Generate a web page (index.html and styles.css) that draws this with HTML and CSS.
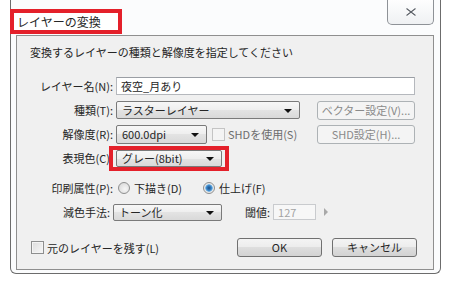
FILE: index.html
```html
<!DOCTYPE html>
<html lang="ja">
  <head>
    <meta charset="UTF-8" />
    <meta name="viewport" content="width=device-width, initial-scale=1.0" />
    <title>レイヤーの変換</title>
    <link rel="stylesheet" href="styles.css">
  </head>
  <body>
    <div class="window">
      <div class="titlebar">
        <span class="title">レイヤーの変換</span>
        <button class="close" type="button" aria-label="閉じる">
          <svg width="14" height="10" viewBox="0 0 14 10">
            <path d="M2.5 1.5 L11.5 8.5 M11.5 1.5 L2.5 8.5" stroke="#ffffff" stroke-width="2.6" fill="none" />
            <path d="M2.5 1.5 L11.5 8.5 M11.5 1.5 L2.5 8.5" stroke="#5a5f66" stroke-width="1.2" fill="none" />
          </svg>
        </button>
      </div>

      <div class="client">
        <p class="intro">変換するレイヤーの種類と解像度を指定してください</p>

        <div class="rows">
          <div class="row">
            <span class="lbl">レイヤー名(N):</span>
            <span class="field field-name">夜空_月あり</span>
          </div>

          <div class="row">
            <span class="lbl">種類(T):</span>
            <span class="combo combo-type">ラスターレイヤー</span>
            <span class="btn btn-side disabled">ベクター設定(V)...</span>
          </div>

          <div class="row">
            <span class="lbl">解像度(R):</span>
            <span class="combo combo-dpi">600.0dpi</span>
            <span class="check disabled"></span>
            <span class="check-label disabled">SHDを使用(S)</span>
            <span class="btn btn-side disabled">SHD設定(H)...</span>
          </div>

          <div class="row">
            <span class="lbl">表現色(C):</span>
            <span class="mark">
              <span class="combo combo-color">グレー(8bit)</span>
            </span>
          </div>

          <div class="row row-radio">
            <span class="lbl">印刷属性(P):</span>
            <span class="radio"></span>
            <span class="radio-label">下描き(D)</span>
            <span class="radio checked"></span>
            <span class="radio-label">仕上げ(F)</span>
          </div>

          <div class="row">
            <span class="lbl lbl-tight">減色手法:</span>
            <span class="combo combo-reduce">トーン化</span>
            <span class="thresh-label">閾値:</span>
            <span class="field field-thresh">127</span>
            <span class="spin-arrow"></span>
          </div>
        </div>

        <div class="footer">
          <span class="check"></span>
          <span class="check-label">元のレイヤーを残す(L)</span>
          <div class="actions">
            <span class="btn btn-main">OK</span>
            <span class="btn btn-main">キャンセル</span>
          </div>
        </div>
      </div>
    </div>
  </body>
</html>
```

FILE: styles.css
```css
* {
  box-sizing: border-box;
}

body {
  margin: 0;
  width: 450px;
  height: 285px;
  overflow: hidden;
  background: #ffffff;
  font-family: "Noto Sans CJK JP", "Noto Sans", sans-serif;
  font-size: 11px;
  color: #262626;
}

.window {
  margin-left: 10px;
  width: 431px;
  height: 274px;
  padding-bottom: 3px;
  border: 1px solid #6c6c6c;
  border-top: none;
  border-radius: 0 0 6px 6px;
  background: #fbfcfd;
}

/* title bar */
.titlebar {
  height: 35px;
  display: flex;
  justify-content: space-between;
  align-items: flex-start;
}

.title {
  margin: 13px 0 0 3px;
  width: 104px;
  height: 17px;
  padding-left: 3px;
  font-size: 12px;
  line-height: 17px;
  background: #ffffff;
  outline: 4px solid #e4202a;
}

.close {
  margin: -2px 6px 0 0;
  width: 47px;
  height: 27px;
  padding: 2px 0 0;
  border: 1px solid #8e9297;
  border-top: none;
  border-radius: 0 0 5px 5px;
  background: linear-gradient(#ffffff, #eff1f3);
  display: flex;
  align-items: center;
  justify-content: center;
}

/* client area */
.client {
  margin: 0 6px 0 5px;
  height: 235px;
  padding: 0 18px 0 13px;
  border: 1px solid #8f8f8f;
  background: #f0f0f0;
}

.intro {
  margin: 8px 0 0;
  line-height: 16px;
}

.rows {
  margin-top: 14px;
}

.row {
  display: flex;
  align-items: center;
  height: 24px;
}

.row-radio {
  margin-top: 6px;
}

.lbl {
  flex: none;
  width: 83px;
  margin-right: 3px;
  text-align: right;
  white-space: nowrap;
}

.lbl-tight {
  width: 80px;
}

/* text fields */
.field {
  height: 18px;
  padding-left: 4px;
  line-height: 16px;
  border: 1px solid #b5b8bd;
  border-top-color: #9a9ea4;
  background: #ffffff;
}

.field-name {
  flex: 1;
}

.field-thresh {
  width: 43px;
  height: 16px;
  line-height: 14px;
  color: #a3a3a3;
  border-color: #c9cbce;
  background: #f7f7f7;
}

/* combo boxes */
.combo {
  position: relative;
  height: 19px;
  padding-left: 5px;
  line-height: 17px;
  border: 1px solid #7a7a7a;
  border-radius: 2px;
  background: linear-gradient(#f7f7f7, #eeeeee 50%, #e3e3e3 50%, #d9d9d9);
  white-space: nowrap;
}

.combo::after {
  content: "";
  position: absolute;
  right: 7px;
  top: 7px;
  border-left: 4px solid transparent;
  border-right: 4px solid transparent;
  border-top: 4px solid #111111;
}

.combo-type {
  width: 184px;
  height: 18px;
  line-height: 16px;
}

.combo-dpi {
  width: 91px;
}

.combo-color {
  display: block;
  width: 106px;
  height: 17px;
  line-height: 15px;
}

.combo-color::after {
  top: 6px;
}

.combo-reduce {
  width: 109px;
  height: 17px;
  line-height: 15px;
}

.combo-reduce::after {
  top: 6px;
}

.mark {
  margin: 0 -7px;
  padding: 0 3px;
  border: 4px solid #e4202a;
}

/* buttons */
.btn {
  height: 19px;
  line-height: 17px;
  text-align: center;
  border: 1px solid #707070;
  border-radius: 3px;
  background: linear-gradient(#f4f4f4, #ececec 50%, #dedede 50%, #d2d2d2);
  white-space: nowrap;
}

.btn.disabled {
  color: #8a8a8a;
  border-color: #adb2b5;
  background: #f4f4f4;
}

.btn-side {
  width: 98px;
  margin-left: auto;
}

.btn-main {
  width: 85px;
}

.actions {
  margin: 0 -2px 0 auto;
  display: flex;
  gap: 10px;
}

/* checks and radios */
.check {
  flex: none;
  width: 13px;
  height: 13px;
  border: 1px solid #8e8f8f;
  background: linear-gradient(135deg, #dcdcdc, #f8f8f8);
  box-shadow: inset 0 0 0 1px #f4f4f4;
}

.check.disabled {
  border-color: #c4c4c4;
  background: #f4f4f4;
}

.row .check {
  margin-left: 5px;
}

.check-label {
  margin-left: 3px;
  white-space: nowrap;
}

.check-label.disabled {
  color: #6d6d6d;
}

.radio {
  flex: none;
  width: 12px;
  height: 12px;
  margin-left: 2px;
  border: 1px solid #8e8f8f;
  border-radius: 50%;
  background: radial-gradient(circle at 60% 60%, #f6f6f6, #d4d4d4);
}

.radio.checked {
  margin-left: 21px;
  background: radial-gradient(circle, #1d4e86 0, #3a86c8 2.5px, #7cb7e6 3.5px, #e6e6e6 4px, #f4f4f4);
}

.radio-label {
  margin-left: 4px;
  white-space: nowrap;
}

.thresh-label {
  margin: 0 3px 0 23px;
}

.spin-arrow {
  margin-left: 8px;
  border-top: 4px solid transparent;
  border-bottom: 4px solid transparent;
  border-left: 4px solid #a8a8a8;
}

.footer {
  display: flex;
  align-items: center;
  height: 19px;
  margin-top: 14px;
}

.footer .check {
  margin-left: 1px;
}
```
